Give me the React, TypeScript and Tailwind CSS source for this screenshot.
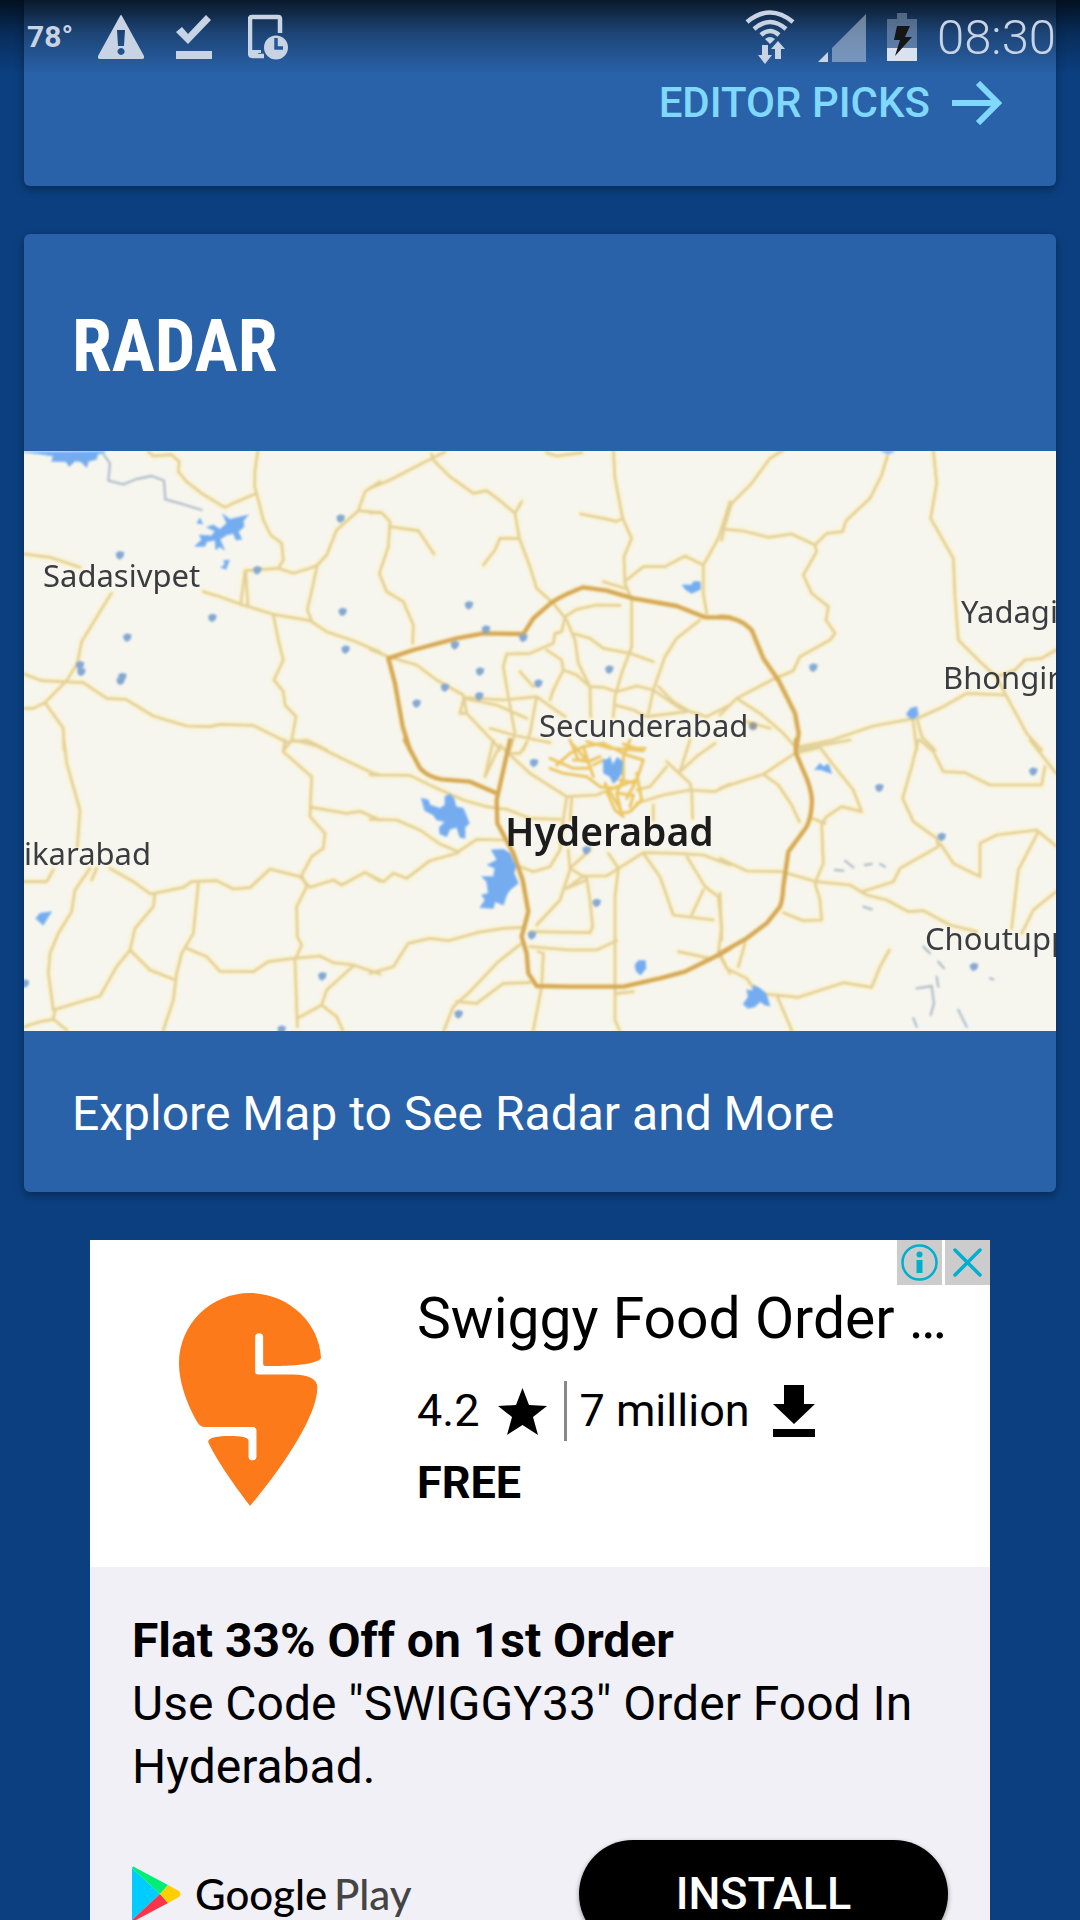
import React from 'react'

type Tile = {
  at: string
  roads: string[]
  ring?: string[]
  city?: string[]
  streams?: string[]
  lakes?: string[]
  ponds?: [number, number][]
}

// Each tile holds its drawing at three times the map's scale.
const tiles: Tile[] = [
  {
    at: 'translate(-4 -1) scale(0.33333)',
    roads: [
      'M385 5L400 18L455 14L478 35L475 65L500 95L545 130L585 155L615 172L650 155L705 132',
      'M714 0L705 60L704 110L715 150L730 210L752 255L785 280L790 330L775 355L820 370L870 355L892 345',
      'M675 362L775 355', 'M675 362L662 465', 'M677 362L684 470',
      'M12 312L90 322L180 352', 'M550 425L600 440L660 462L760 493L870 512L920 545L1000 572L1080 606',
      'M892 345L880 400L862 480L874 510', 'M892 345L920 315L950 240L1015 182L1035 125L1080 95', 'M1015 182L1080 188',
      'M274 430L240 485L185 575L172 640L140 692L75 758L40 775L12 775',
      'M12 672L65 692L190 698L260 745L318 748L400 798L500 828L570 830L600 823L700 826L800 876L860 870L920 900',
      'M75 758L130 835L132 900', 'M760 495L775 570L790 630L762 690L790 725L795 765L828 800L815 870L792 900',
    ],
    streams: ['M245 5L270 40L265 92L310 103L350 87L395 78L432 92L436 148L480 160L545 180'],
    lakes: [
      'M12 6L60 12L100 18L95 34L138 35L148 50L165 33L182 35L200 52L205 34L230 28L232 14L255 5Z',
      'M525 288L545 270L538 255L575 258L585 243L560 232L580 225L600 238L620 220L608 192L630 208L655 202L685 195L670 212L672 230L655 245L665 268L648 270L640 250L620 255L600 268L614 300L598 290L588 300L585 270L560 275L555 288Z',
      'M540 205L548 222L532 220Z', 'M612 332L628 330L618 358L602 352L614 345Z',
    ],
    ponds: [[300, 315], [577, 503], [322, 562], [968, 485], [977, 598], [962, 205], [180, 645], [184, 665], [307, 680], [302, 692], [712, 360]],
  },
  {
    at: 'translate(346 -1) scale(0.33333)',
    roads: [
      'M0 115L60 90L185 25L225 6', 'M185 12L190 30L240 80L310 130L350 122L390 152L435 190L448 265L480 350L500 415L545 455',
      'M435 190L455 155', 'M448 265L390 265L375 300L340 345', 'M0 188L35 188L60 215L55 290L28 370L50 425L100 455L130 525L128 580',
      'M60 230L145 242L192 312', 'M530 8L560 18L635 8', 'M730 0L735 85L758 205L785 265L762 320L765 400L785 450L785 590L755 670L735 740L730 800',
      'M632 192L700 205L740 214L758 205', 'M770 390L820 350L885 350L945 318L1000 345L1045 265L1080 155', 'M1000 345L1000 430L1010 490',
      'M765 415L700 395', 'M550 460L590 510L615 570L625 640L660 710L662 800', 'M585 500L620 478L680 465L750 466', 'M615 552L660 565L700 595L780 610L850 635',
      'M585 500L575 545L555 550L550 580L480 610L410 612L400 650L415 740', 'M530 600L575 630L580 660L550 720L540 750',
      'M580 660L620 675L660 710L700 712L740 725L800 708L850 720L930 775L1010 800L1080 765',
      'M990 510L920 565L885 620L850 720L835 790', 'M0 598L55 620L140 645L200 690L280 735L290 790L375 880L390 900', 'M280 742L400 750L500 740L585 800',
      'M280 745L380 765L470 805', 'M415 740L435 850L420 900', 'M500 740L480 850L460 900', 'M360 835L430 855L500 870L540 878',
      'M735 765L790 780L830 800L950 785', 'M865 710L910 755L960 785', 'M450 665L490 710', 'M290 790L270 790L280 750',
    ],
    ring: ['M120 900L98 830L75 700L55 625L130 600L260 565L340 550L460 552L490 505L545 457Q590 430 640 412L710 422L790 445L920 468L1005 502L1080 502'],
    ponds: [[297, 465], [330, 664], [225, 712], [328, 738], [140, 760], [505, 700], [718, 658], [460, 563], [348, 538], [255, 585]],
    lakes: ['M937 405L965 405L970 395L990 395L992 418L965 430L948 420Z'],
  },
  {
    at: 'translate(696 -1) scale(0.33333)',
    roads: [
      'M190 0L150 25L95 100L35 160L15 225L5 270', 'M20 238L70 243L145 262L215 252L285 285L320 250L368 245L378 212L450 145L485 75L503 15',
      'M285 285L290 305L250 375L275 430L325 470L318 510L345 550L330 570L240 620L220 662L155 690L50 745L0 795',
      'M640 0L650 100L632 205L700 325L705 440L715 570L785 640L830 680L855 730L920 850L965 900',
      'M830 680L885 660L915 630L965 625L1008 600', 'M855 735L740 730L670 770L600 802L460 828L330 872L240 890', 'M578 800L590 900', 'M592 810L605 860L645 900',
      'M50 745L120 790L190 850L225 890', 'M80 815L150 835',
    ],
    ring: ['M0 500Q60 502 95 540L130 625L175 690L225 790L236 850L228 900'],
    lakes: ['M560 790L572 775L590 770L595 795L578 808L565 800Z', 'M485 3L523 3L510 10L495 8Z'],
    ponds: [[280, 652]],
  },
  {
    at: 'translate(-4 289) scale(0.33333)',
    roads: [
      'M132 0L140 70L180 210L172 320', 'M795 0L790 35L875 110L870 230L915 280L910 325L875 350L845 405L860 440L830 500L832 590L845 615L825 660L832 860',
      'M820 0L890 18L1000 72L1060 100L1080 105', 'M875 202L980 220L1020 214L1080 240', 'M210 385L165 450L155 515L115 580L90 640L85 700L100 810L240 768L290 680L330 630L345 565L400 500L405 462',
      'M215 420L230 385', 'M12 425L80 425L100 390', 'M270 385L340 425L392 462L490 442L515 425L590 422L640 447L690 443L750 387L840 410L870 442L940 420L965 435L1035 397L1080 424',
      'M535 430L520 580L485 640L470 700L460 780L430 870', 'M330 630L390 690L460 718', 'M500 625L560 650L600 694L700 695L745 665L820 655L900 648L940 668L1000 675L1080 702',
      'M1000 678L920 750L905 795L832 835', 'M905 795L950 830L968 870', 'M12 860L60 845L100 838L140 870', 'M100 838L105 810',
    ],
    lakes: ['M48 535L60 520L95 515L82 535L70 555Z'],
    ponds: [[907, 708], [785, 868], [15, 730]],
  },
  {
    at: 'translate(346 289) scale(0.33333)',
    roads: [
      'M0 105L120 106L190 140L280 180L350 200L410 208L480 235L570 238', 'M0 238L80 240L150 270L210 312L265 335L320 298L400 300', 'M265 338L180 362L110 415L70 400L40 425L0 405',
      'M0 700L70 680L115 610L180 595L235 602L320 578L400 565L455 562', 'M455 610L385 665L300 755L250 800L222 870', 'M260 785L320 790L400 730L480 728',
      'M345 110L390 15L415 40L480 100L590 170L680 165L740 140', 'M370 0L345 110', 'M470 10L450 40L415 40', 'M590 175L580 235L570 330L540 380L490 395L450 380',
      'M605 175L600 240', 'M595 330L600 390L570 480L500 555', 'M590 445L640 408L710 408L820 338L920 340L1000 345L1080 375',
      'M600 385L650 415L660 480L668 560L660 578L480 575', 'M600 385L660 330', 'M590 445L650 420', 'M480 620L600 630L680 630L740 602', 'M505 635L520 640L515 740L490 870',
      'M745 385L735 470L735 700L735 840L748 870', 'M820 340L870 410L910 525L1030 540', 'M945 340L1005 440L1045 470L1055 560L1045 640L1080 700', 'M1000 450L965 525', 'M925 635L1020 655',
      'M800 190L880 165L960 150L1035 155L1080 132', 'M965 150L968 235', 'M850 195L850 240', 'M890 65L960 130L965 150', 'M890 80L840 140L800 150', 'M930 95L985 45L1035 10', 'M930 95L960 0', 'M740 760L790 755',
      'M715 340L745 385',
    ],
    ring: [
      'M105 0L150 85Q175 112 215 118L300 125L380 160', 'M420 0L400 90L380 180L382 250L430 340L458 420L475 515L455 590L470 640L475 700L500 738L600 740L760 740L870 715L945 695L1045 645L1080 625',
    ],
    city: [
      'M540 85L580 100L650 110L690 140L730 145L800 120L820 60L770 45L700 10L640 20L600 40L560 75', 'M600 0L625 60L655 65L690 50', 'M640 20L655 65L670 110',
      'M780 0L760 50L760 115L740 160L755 220L780 215L815 180L800 100', 'M710 155L735 210L760 230', 'M705 130L755 215', 'M650 5L720 25L820 32L760 12', 'M765 25L825 25', 'M670 75L700 60', 'M540 55L610 85L655 85',
      'M610 15L650 60L610 60', 'M740 160L790 165L780 200', 'M750 120L795 130L770 175',
    ],
    lakes: [
      'M155 175L175 180L180 195L210 205L225 195L225 170L240 162L252 175L258 200L280 205L298 250L285 262L285 295L270 292L260 262L240 268L230 290L210 282L208 262L225 245L200 240L190 225L165 212Z',
      'M365 330L400 328L420 340L430 365L438 375L432 400L445 430L420 450L410 465L400 495L375 485L370 505L330 503L345 480L335 465L355 460L350 425L335 410L370 410L375 385L352 375L380 360Z',
      'M700 60L712 58L720 50L728 75L742 52L758 65L755 100L740 122L730 130L720 110L702 100Z',
      'M795 675L805 662L826 662L828 685L812 705L800 695Z',
    ],
    ponds: [[492, 68], [680, 488], [486, 585], [266, 822], [650, 330]],
  },
  {
    at: 'translate(696 289) scale(0.33333)',
    roads: [
      'M0 145L60 125L130 103L225 40L300 22L340 75L400 150L425 215L365 200L320 230L305 250L310 370L285 430L300 480L305 540L250 542L190 518',
      'M130 103L175 135L215 195L238 245', 'M275 235L315 250', 'M240 28L390 0', 'M595 0L575 80L548 175L580 245L650 295L655 320L540 385L520 425L425 455',
      'M600 0L640 35L670 95L735 98L810 135L965 135L975 80', 'M930 0L1008 100', 'M0 355L80 393L185 395L290 425L390 435L440 465L500 480L565 515L610 512L690 555L770 575',
      'M660 310L700 370L780 410L780 310L830 285L950 270L1008 318', 'M955 275L895 390L875 565', 'M1008 455L940 510L905 580',
      'M0 640L20 685L80 715L110 760L165 765L235 772L370 728L455 742L480 680L508 630', 'M75 610L55 680', 'M170 765L215 870', 'M0 460L5 600',
    ],
    ring: ['M228 0L228 40L262 120Q280 170 275 200Q272 235 260 260L205 335L190 440Q188 480 180 500L140 550L80 595L0 640'],
    lakes: [
      'M70 792L85 770L80 750L98 752L100 735L120 745L138 760L150 798L135 795L120 785L105 800L85 805Z', 'M285 88L300 70L310 80L325 72L335 100L318 95L305 90Z',
    ],
    ponds: [[478, 143], [665, 290], [762, 680], [940, 94]],
    streams: ['M610 620L630 640', 'M655 665L672 685', 'M650 710L655 740', 'M590 745L635 738L642 790L632 825', 'M580 835L590 860', 'M715 810L740 860', 'M345 390L370 392', 'M375 362L400 382', 'M435 375L455 372', 'M480 372L495 380', 'M430 500L455 508', 'M810 715L820 718'],
  },
]

function RadarMap() {
  return (
    <svg viewBox="0 0 1032 580" className="block w-full" role="img" aria-label="Map of Hyderabad">
      <rect width="1032" height="580" fill="#f6f6ef" />
      <g fill="none" strokeLinejoin="round" strokeLinecap="round" className="blur-[1px]">
        {tiles.map((t) => (
          <path key={t.at} transform={t.at} d={[...t.roads, ...(t.ring ?? [])].join('')} stroke="#fbf3d3" strokeWidth="22" />
        ))}
        {tiles.map((t) => (
          <path key={t.at} transform={t.at} d={t.roads.join('')} stroke="#e2d09a" strokeWidth="8" />
        ))}
        {tiles.map((t) => (
          <g key={t.at} transform={t.at}>
            <path d={(t.city ?? []).join('')} stroke="#ecc765" strokeWidth="9" />
            <path d={(t.ring ?? []).join('')} stroke="#d5aa5a" strokeWidth="13" />
            <path d={(t.streams ?? []).join('')} stroke="#b3bfca" strokeWidth="7" />
            <path d={(t.lakes ?? []).join('')} fill="#75acef" stroke="#8cbcf2" strokeWidth="3" />
            {(t.ponds ?? []).map(([x, y]) => (
              <path key={x + '-' + y} d={`M${x - 13} ${y - 5}l11 -7l15 4l-3 14l-11 8l-9 -6Z`} fill="#84a8d2" />
            ))}
          </g>
        ))}
        <circle cx="729" cy="275" r="4" fill="#999" />
      </g>
      <g className="font-['Noto_Sans']" fill="#3a3c40" fontSize="31">
        <text x="19" y="136">Sadasivpet</text>
        <text x="937" y="172">Yadagi</text>
        <text x="919" y="238">Bhongir</text>
        <text x="515" y="286">Secunderabad</text>
        <text x="0" y="414">ikarabad</text>
        <text x="901" y="499">Choutupp</text>
        <text x="481" y="395" fontSize="39" fontWeight="600" fill="#1c1c1c">Hyderabad</text>
      </g>
    </svg>
  )
}

function StatusBar() {
  return (
    <header className="absolute inset-x-0 top-0 flex h-[74px] items-center justify-between bg-linear-to-b from-black/75 via-black/30 via-45% to-transparent pr-[24px] pl-[27px] text-[#c8d3e4]">
      <div className="flex items-center">
        <span className="w-[71px] text-[30px] leading-none font-bold">78°</span>
        <svg viewBox="0 0 46 46" className="h-[46px] w-[46px]" fill="currentColor" aria-label="Warning">
          <path fillRule="evenodd" d="M22 2Q23 0 24 2L46 42Q47 45 44 45H2Q-1 45 0 42ZM19 16L20 32H26L27 16ZM23 34a3.5 3.5 0 1 0 .1 0Z" />
        </svg>
        <svg viewBox="0 0 36 46" className="ml-[32px] h-[46px] w-[36px]" fill="currentColor" aria-label="Done">
          <path d="M0 18L6 13L12 20L30 1L35 6L12 30ZM0 37H36V45H0Z" />
        </svg>
        <svg viewBox="0 0 40 46" className="ml-[36px] h-[46px] w-[40px]" aria-label="Scheduled device">
          <path d="M32 19V5Q32 3 30 3H4Q2 3 2 5V39Q2 42 5 42H16" fill="none" stroke="currentColor" strokeWidth="4.5" />
          <path d="M2 36H13V39H10V42H3Z" fill="currentColor" />
          <circle cx="28" cy="33.500" r="12" fill="currentColor" />
          <path d="M28 24V34H35" fill="none" stroke="#2358a0" strokeWidth="3.500" />
        </svg>
      </div>
      <div className="flex items-center">
        <svg viewBox="0 0 50 54" className="h-[54px] w-[50px]" aria-label="Wi-Fi">
          <g fill="none" stroke="currentColor" strokeWidth="4.500">
            <path d="M2 12Q25 -7 48 12" />
            <path d="M9 19Q25 5 41 19" />
            <path d="M16 25Q25 17 34 25" />
          </g>
          <path d="M20 29Q25 25 30 29L25 34Z" fill="currentColor" />
          <path d="M17 35H23V45H27L20 54L13 45H17ZM30 49H36V39H40L33 31L26 39H30Z" fill="currentColor" />
        </svg>
        <svg viewBox="0 0 48 50" className="ml-[23px] h-[50px] w-[48px]" fill="currentColor" aria-label="Signal">
          <path d="M0 50L10 40V50Z" />
          <path d="M14 50V36L48 2V50Z" opacity=".5" />
        </svg>
        <svg viewBox="0 0 30 48" className="ml-[21px] h-[48px] w-[30px]" aria-label="Battery charging">
          <path d="M10 0H20V6H30V35H0V6H10Z" fill="currentColor" opacity=".35" />
          <path d="M0 35H30V48H0Z" fill="#d9e2ef" />
          <path d="M10 13H23L18 24H25L8 43L13 27H7Z" fill="#161616" />
        </svg>
        <time className="ml-[20px] text-[49px] leading-none font-light">08:30</time>
      </div>
    </header>
  )
}

const card = 'bg-[#2962a9] shadow-[0_3px_8px_rgba(0,0,0,0.35)]'

export default function App() {
  return (
    <div className="relative h-screen overflow-hidden bg-[#0b3f7f] font-['Roboto',sans-serif]">
      <main className="flex flex-col px-6">
        <section className={card + ' flex h-[186px] items-start justify-end rounded-b-md pt-[79px] pr-[54px]'}>
          <a href="#editor-picks" className="flex items-center gap-[22px] text-[42px] leading-[48px] font-medium text-[#80d8ff]">
            EDITOR PICKS
            <svg viewBox="0 0 50 44" className="h-[44px] w-[50px]" fill="none" stroke="currentColor" strokeWidth="6">
              <path d="M0 22H46M26 2L46 22L26 42" />
            </svg>
          </a>
        </section>

        <section className={card + ' mt-12 rounded-md'}>
          <h2 className="px-12 pt-[72px] pb-[64px] font-['Roboto_Condensed','Roboto',sans-serif] text-[72px] leading-[81px] font-bold text-white">RADAR</h2>
          <RadarMap />
          <p className="px-12 pt-[51px] pb-[46px] text-[48px] leading-[64px] text-white">Explore Map to See Radar and More</p>
        </section>

        <aside className="relative mx-[66px] mt-12 bg-white text-black">
          <div className="absolute top-0 right-0 flex gap-[3px]">
            <button aria-label="Ad information" className="bg-[#cccccc] text-[#00aecd]">
              <svg viewBox="0 0 45 45" className="block h-[45px] w-[45px]">
                <circle cx="22.500" cy="22.500" r="17" fill="none" stroke="currentColor" strokeWidth="2.500" />
                <circle cx="22.500" cy="14.500" r="3" fill="currentColor" />
                <path d="M19.500 20H25.500V33H19.500Z" fill="currentColor" />
              </svg>
            </button>
            <button aria-label="Close ad" className="bg-[#cccccc] text-[#00aecd]">
              <svg viewBox="0 0 45 45" className="block h-[45px] w-[45px]">
                <path d="M10 10L35 35M35 10L10 35" stroke="currentColor" strokeWidth="3.500" strokeLinecap="round" />
              </svg>
            </button>
          </div>
          <div className="flex h-[327px] items-start pl-[83px]">
            <svg viewBox="280 170 460 685" className="mt-[47px] h-[228px] w-[153px] shrink-0" aria-label="Swiggy">
              <path fill="#fc7a19" d="M512 188C625 188 720 275 725 382C724 398 660 407 600 407L556 407Q551 406 551 401V320Q551 309 539 309Q527 309 527 320V426Q528 433 535 433H640C690 433 714 448 714 472C713 560 610 710 512 828C460 762 405 680 386 636C384 623 415 618 450 618C485 618 507 622 507 632V680Q508 691 519 691Q531 690 531 680V600Q530 591 522 591H380C365 591 358 585 350 571C318 515 298 450 298 400C298 280 395 188 512 188Z" />
            </svg>
            <div className="ml-[91px] pt-[43px]">
              <h3 className="text-[57px] leading-[72px]">Swiggy Food Order …</h3>
              <div className="mt-[23px] flex h-[66px] items-center text-[45px] leading-[64px]">
                <span>4.2</span>
                <svg viewBox="0 0 49 47" className="ml-[19px] h-[47px] w-[49px]" aria-label="stars">
                  <path d="M24.500 0L31 17L49 18L35 29L40 47L24.500 37L9 47L14 29L0 18L18 17Z" />
                </svg>
                <span className="ml-[17px] h-[60px] w-[3px] bg-[#888]" />
                <span className="ml-[12px]">7 million</span>
                <svg viewBox="0 0 42 52" className="ml-[23px] h-[52px] w-[42px]" aria-label="downloads">
                  <path d="M11 0H31V19H42L21 39L0 19H11ZM0 44H42V52H0Z" />
                </svg>
              </div>
              <p className="mt-[7px] text-[45px] leading-[64px] font-bold">FREE</p>
            </div>
          </div>
          <div className="bg-[#f0f0f6] px-[42px] pt-[42px] pb-12">
            <p className="text-[48px] leading-[63px] font-bold">Flat 33% Off on 1st Order</p>
            <p className="text-[48px] leading-[63px]">Use Code "SWIGGY33" Order Food In Hyderabad.</p>
            <div className="mt-[42px] flex items-center justify-between">
              <a href="#google-play" className="flex items-center gap-[14px]">
                <svg viewBox="0 0 49 56" className="h-[56px] w-[49px]">
                  <path d="M0 2L28 28L0 54Z" fill="#00cdff" />
                  <path d="M0 2Q1 -1 4 2L36 19L28 28Z" fill="#00ee76" />
                  <path d="M0 54Q1 57 4 54L36 37L28 28Z" fill="#fb3449" />
                  <path d="M28 28L36 19L47 25Q50 28 47 31L36 37Z" fill="#ffcf00" />
                </svg>
                <span className="font-['Lato',sans-serif] text-[42px] leading-[56px] font-medium">
                  Google <span className="-ml-1 text-[#444]">Play</span>
                </span>
              </a>
              <button className="h-[108px] w-[369px] rounded-full bg-black text-[45px] font-medium text-white shadow-[0_2px_5px_rgba(0,0,0,0.4)]">INSTALL</button>
            </div>
          </div>
        </aside>
      </main>
      <StatusBar />
    </div>
  )
}
